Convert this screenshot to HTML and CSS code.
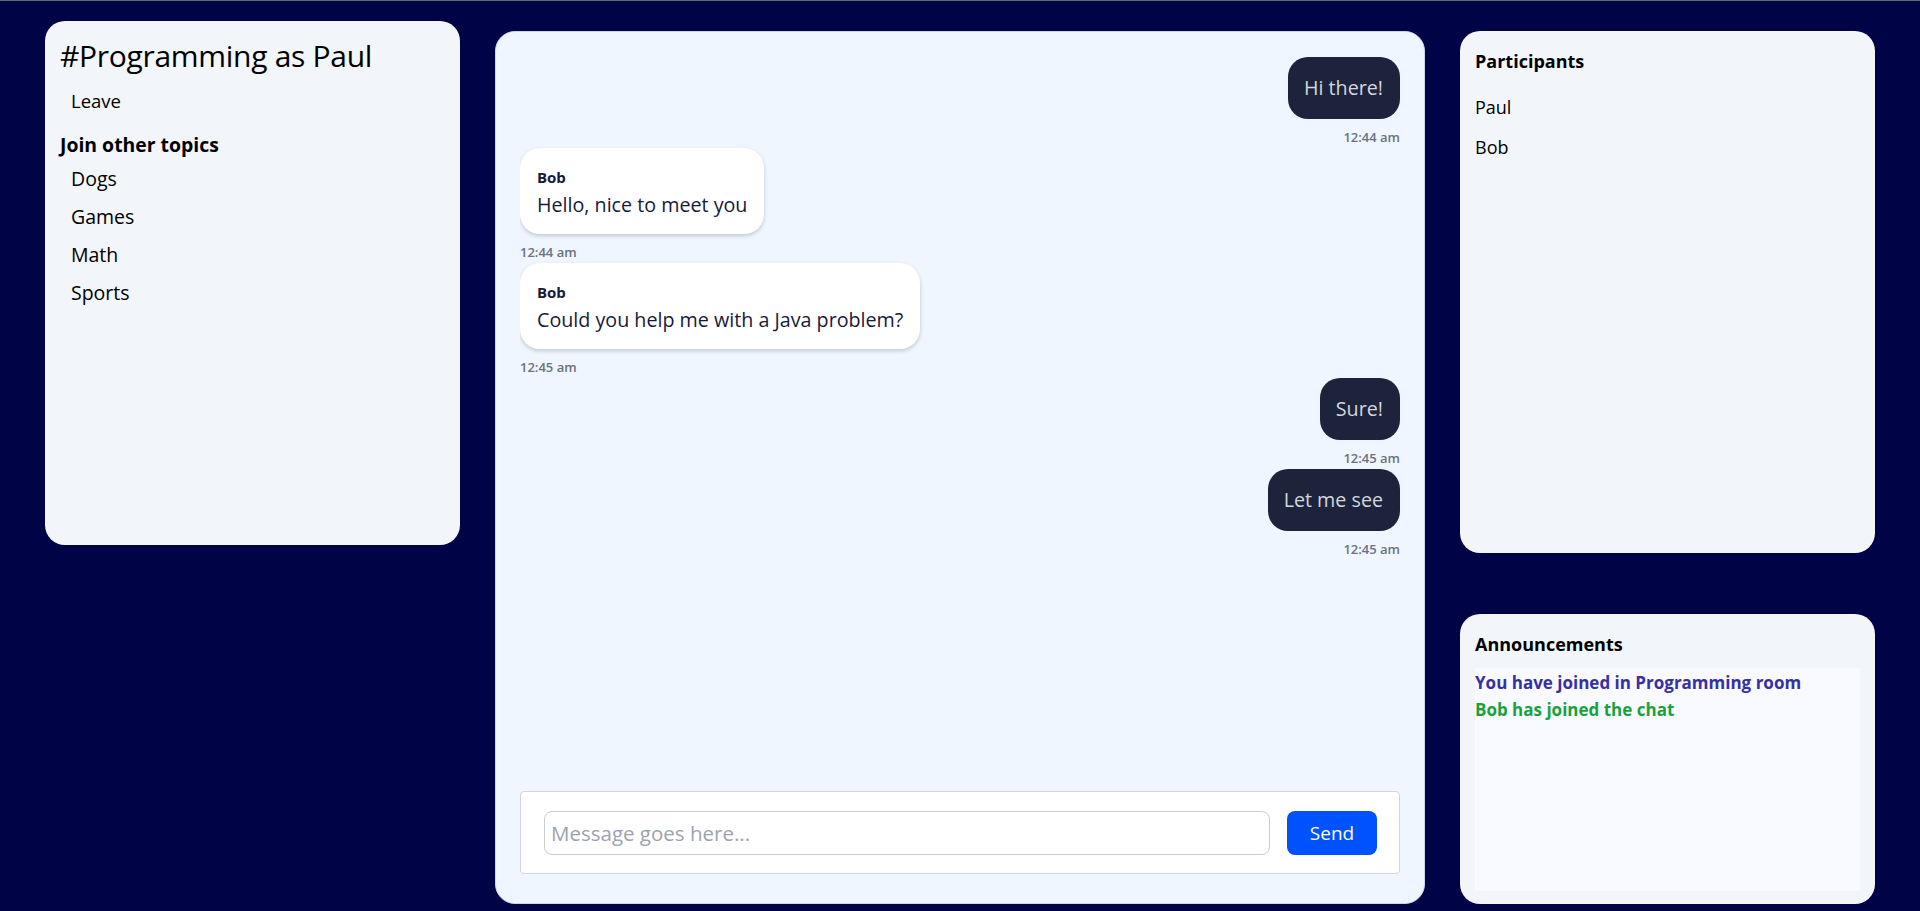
FILE: index.html
```html
<!DOCTYPE html>
<html lang="en">
<head>
<meta charset="utf-8">
<title>Chat - Programming</title>
<link rel="stylesheet" href="styles.css">
</head>
<body>
<div class="layout">
  <aside class="panel rooms">
    <h1 class="room-title">#Programming as Paul</h1>
    <div class="leave">Leave</div>
    <h2 class="section-title">Join other topics</h2>
    <ul class="topic-list">
      <li>Dogs</li>
      <li>Games</li>
      <li>Math</li>
      <li>Sports</li>
    </ul>
  </aside>

  <main class="chat">
    <div class="messages">
      <div class="msg mine">
        <div class="bubble">Hi there!</div>
        <div class="time">12:44 am</div>
      </div>
      <div class="msg theirs">
        <div class="bubble">
          <div class="author">Bob</div>
          <div class="text">Hello, nice to meet you</div>
        </div>
        <div class="time">12:44 am</div>
      </div>
      <div class="msg theirs">
        <div class="bubble">
          <div class="author">Bob</div>
          <div class="text">Could you help me with a Java problem?</div>
        </div>
        <div class="time">12:45 am</div>
      </div>
      <div class="msg mine">
        <div class="bubble">Sure!</div>
        <div class="time">12:45 am</div>
      </div>
      <div class="msg mine">
        <div class="bubble">Let me see</div>
        <div class="time">12:45 am</div>
      </div>
    </div>
    <form class="composer">
      <input class="composer-input" type="text" placeholder="Message goes here...">
      <button class="send-btn" type="button">Send</button>
    </form>
  </main>

  <div class="side">
    <section class="panel participants">
      <h2 class="section-title">Participants</h2>
      <ul class="people">
        <li>Paul</li>
        <li>Bob</li>
      </ul>
    </section>
    <section class="panel announcements">
      <h2 class="section-title">Announcements</h2>
      <div class="announce-box">
        <div class="announce self">You have joined in Programming room</div>
        <div class="announce join">Bob has joined the chat</div>
      </div>
    </section>
  </div>
</div>
</body>
</html>
```

FILE: styles.css
```css
* { box-sizing: border-box; }

html, body {
  margin: 0;
  height: 911px;
}

body {
  background: #010347;
  border-top: 1px solid #5b6e6e;
  font-family: "Open Sans", "Noto Sans", sans-serif;
  color: #000;
  overflow: hidden;
}

.layout {
  display: grid;
  grid-template-columns: 415px 930px 415px;
  column-gap: 35px;
  padding: 20px 45px 0;
  align-items: start;
}

.panel {
  background: #f2f5fa;
  border-radius: 20px;
}

/* Left rooms panel */
.rooms {
  height: 524px;
  padding: 17px 15px;
}

.room-title {
  margin: 0;
  font-size: 30px;
  line-height: 36px;
  font-weight: 400;
  letter-spacing: -0.3px;
}

.leave {
  margin-top: 13px;
  padding-left: 11px;
  font-size: 18.5px;
  line-height: 28px;
}

.section-title {
  margin: 0;
  font-size: 18px;
  line-height: 28px;
  font-weight: 700;
}

.rooms .section-title {
  margin-top: 16px;
  font-size: 19.4px;
}

.topic-list {
  list-style: none;
  margin: 6px 0 0;
  padding: 0 0 0 11px;
  display: flex;
  flex-direction: column;
  gap: 10px;
}

.topic-list li {
  font-size: 19.5px;
  line-height: 28px;
}

/* Center chat */
.chat {
  margin-top: 10px;
  height: 873px;
  background: #eff6ff;
  border: 1px solid #c9d5ea;
  border-radius: 20px;
  padding: 24px;
  display: flex;
  flex-direction: column;
}

.messages {
  flex: 1;
  padding-top: 1px;
  display: flex;
  flex-direction: column;
  gap: 3px;
  overflow: hidden;
}

.msg {
  display: flex;
  flex-direction: column;
}

.msg.mine { align-items: flex-end; }
.msg.theirs { align-items: flex-start; }

.bubble {
  border-radius: 20px;
  font-size: 19.7px;
  line-height: 28px;
}

.mine .bubble {
  background: #1c233b;
  color: #d3d7de;
  padding: 17px 17px 17px 16px;
}

.theirs .bubble {
  background: #ffffff;
  color: #161a3a;
  padding: 19px 17px 15px;
  box-shadow: 0 2px 4px rgba(0, 0, 0, 0.18);
}

.author {
  font-size: 15px;
  line-height: 20px;
  font-weight: 700;
  color: #171a3a;
}

.text {
  margin-top: 4px;
}

.time {
  margin-top: 10px;
  font-size: 13px;
  line-height: 16px;
  font-weight: 600;
  color: #6b7280;
}

.composer {
  margin: 0 0 5px;
  height: 83px;
  background: #ffffff;
  border: 1px solid #d1d5db;
  border-radius: 4px;
  padding: 19px 22px 19px 23px;
  display: flex;
  align-items: center;
  gap: 17px;
}

.composer-input {
  flex: 1;
  height: 44px;
  border: 1px solid #c9ccd1;
  border-radius: 8px;
  padding: 0 6px;
  font-family: inherit;
  font-size: 20.5px;
  color: #111;
  background: #fff;
  outline: none;
}

.composer-input::placeholder {
  color: #9ca3af;
}

.send-btn {
  width: 90px;
  height: 44px;
  border: none;
  border-radius: 8px;
  background: #0052ff;
  color: #ffffff;
  font-family: inherit;
  font-size: 19px;
}

/* Right column */
.side {
  margin-top: 10px;
  height: 873px;
  display: flex;
  flex-direction: column;
  justify-content: space-between;
}

.participants {
  height: 522px;
  padding: 16px 15px;
}

.people {
  list-style: none;
  margin: 18px 0 0;
  padding: 0;
  display: flex;
  flex-direction: column;
  gap: 12px;
}

.people li {
  font-size: 18px;
  line-height: 28px;
}

.announcements {
  height: 290px;
  padding: 16px 15px 13px 15px;
  display: flex;
  flex-direction: column;
}

.announce-box {
  flex: 1;
  margin-top: 10px;
  padding-top: 1px;
  background: #f8faff;
}

.announce {
  font-size: 17px;
  line-height: 27px;
  font-weight: 700;
}

.announce.self { color: #3730a3; }
.announce.join { color: #17a33a; }
```
